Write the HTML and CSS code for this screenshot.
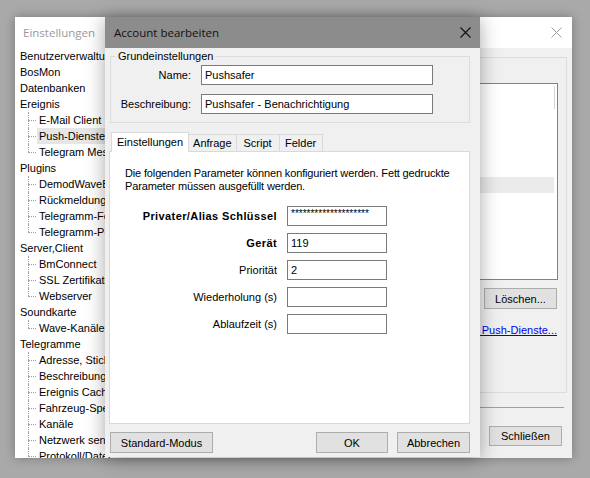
FILE: index.html
```html
<!DOCTYPE html>
<html lang="de">
<head>
    <meta charset="UTF-8">
    <title>Account bearbeiten</title>
    <link rel="stylesheet" href="styles.css">
</head>
<body>
    <div class="desktop">
        <!-- Hauptfenster Einstellungen (inaktiv) -->
        <div class="window settings-window">
            <div class="titlebar">
                <span class="title">Einstellungen</span>
                <svg class="close" width="11" height="11" viewBox="0 0 11 11"><path d="M0.5 0.5 L10.5 10.5 M10.5 0.5 L0.5 10.5" stroke="#9a9a9a" stroke-width="1"/></svg>
            </div>
            <div class="window-body">
                <ul class="tree">
                    <li><span class="label">Benutzerverwaltung</span></li>
                    <li><span class="label">BosMon</span></li>
                    <li><span class="label">Datenbanken</span></li>
                    <li><span class="label">Ereignis</span>
                        <ul class="children">
                            <li><span class="label">E-Mail Client</span></li>
                            <li class="selected"><span class="label">Push-Dienste</span></li>
                            <li><span class="label">Telegram Messenger</span></li>
                        </ul>
                    </li>
                    <li><span class="label">Plugins</span>
                        <ul class="children">
                            <li><span class="label">DemodWaveBridge</span></li>
                            <li><span class="label">Rückmeldung</span></li>
                            <li><span class="label">Telegramm-Felder</span></li>
                            <li><span class="label">Telegramm-Port</span></li>
                        </ul>
                    </li>
                    <li><span class="label">Server,Client</span>
                        <ul class="children">
                            <li><span class="label">BmConnect</span></li>
                            <li><span class="label">SSL Zertifikate</span></li>
                            <li><span class="label">Webserver</span></li>
                        </ul>
                    </li>
                    <li><span class="label">Soundkarte</span>
                        <ul class="children">
                            <li><span class="label">Wave-Kanäle</span></li>
                        </ul>
                    </li>
                    <li><span class="label">Telegramme</span>
                        <ul class="children">
                            <li><span class="label">Adresse, Stichwort</span></li>
                            <li><span class="label">Beschreibungen</span></li>
                            <li><span class="label">Ereignis Cache</span></li>
                            <li><span class="label">Fahrzeug-Speicher</span></li>
                            <li><span class="label">Kanäle</span></li>
                            <li><span class="label">Netzwerk senden</span></li>
                            <li><span class="label">Protokoll/Datei</span></li>
                        </ul>
                    </li>
                </ul>
                <div class="settings-pane">
                    <div class="pane-group">
                        <div class="list-box">
                            <div class="scroll-mark"></div>
                            <div class="list-row selected"></div>
                        </div>
                        <button class="btn btn-delete">Löschen...</button>
                        <a class="link" href="#">Weitere Push-Dienste...</a>
                    </div>
                    <div class="pane-footer">
                        <button class="btn btn-close">Schließen</button>
                    </div>
                </div>
            </div>
        </div>

        <!-- Dialog Account bearbeiten -->
        <div class="window dialog">
            <div class="titlebar">
                <span class="title">Account bearbeiten</span>
                <svg class="close" width="11" height="11" viewBox="0 0 11 11"><path d="M0.5 0.5 L10.5 10.5 M10.5 0.5 L0.5 10.5" stroke="#111" stroke-width="1.1"/></svg>
            </div>
            <div class="dialog-body">
                <fieldset class="group">
                    <legend>Grundeinstellungen</legend>
                    <div class="group-row">
                        <label for="name">Name:</label>
                        <input type="text" id="name" value="Pushsafer">
                    </div>
                    <div class="group-row">
                        <label for="beschreibung">Beschreibung:</label>
                        <input type="text" id="beschreibung" value="Pushsafer - Benachrichtigung">
                    </div>
                </fieldset>

                <div class="tabs">
                    <span class="tab active">Einstellungen</span>
                    <span class="tab">Anfrage</span>
                    <span class="tab">Script</span>
                    <span class="tab">Felder</span>
                </div>
                <div class="tab-panel">
                    <p class="hint">Die folgenden Parameter können konfiguriert werden. Fett gedruckte<br>Parameter müssen ausgefüllt werden.</p>
                    <div class="fields">
                        <label class="required" for="key">Privater/Alias Schlüssel</label>
                        <input type="text" id="key" class="secret" value="********************">
                        <label class="required" for="geraet">Gerät</label>
                        <input type="text" id="geraet" value="119">
                        <label for="prio">Priorität</label>
                        <input type="text" id="prio" value="2">
                        <label for="wdh">Wiederholung (s)</label>
                        <input type="text" id="wdh" value="">
                        <label for="ablauf">Ablaufzeit (s)</label>
                        <input type="text" id="ablauf" value="">
                    </div>
                </div>

                <div class="dialog-buttons">
                    <button class="btn btn-mode">Standard-Modus</button>
                    <span class="spacer"></span>
                    <button class="btn btn-ok">OK</button>
                    <button class="btn btn-cancel">Abbrechen</button>
                </div>
            </div>
        </div>
    </div>
</body>
</html>
```

FILE: styles.css
```css
body {
    margin: 0;
    background-color: #a9a9a9;
    font-family: "Liberation Sans", Arial, sans-serif;
    font-size: 11px;
    color: #000;
    overflow: hidden;
}
.desktop {
    position: relative;
    width: 590px;
    height: 478px;
}
.window {
    position: absolute;
    display: flex;
    flex-direction: column;
    background-color: #f0f0f0;
    box-sizing: border-box;
}
.titlebar {
    height: 31px;
    flex-shrink: 0;
    display: flex;
    align-items: center;
    justify-content: space-between;
    padding: 0 10px 0 8px;
    font-family: "Open Sans", sans-serif;
    font-size: 11.5px;
}
.close {
    display: block;
}

/* Einstellungen */
.settings-window {
    left: 15px;
    top: 17px;
    width: 557px;
    height: 441px;
    box-shadow: 0 0 10px rgba(0, 0, 0, 0.3);
}
.settings-window .titlebar {
    background-color: #fff;
    color: #999;
}
.window-body {
    flex: 1;
    display: flex;
    min-height: 0;
}
.tree {
    list-style: none;
    margin: 0;
    padding: 0 0 0 5px;
    width: 220px;
    flex-shrink: 0;
    background-color: #fff;
    overflow: hidden;
    white-space: nowrap;
}
.tree li {
    line-height: 16px;
}
.tree .children {
    list-style: none;
    margin: 0 0 0 8px;
    padding: 0;
}
.children li {
    position: relative;
    padding-left: 9px;
}
.children li::before {
    content: "";
    position: absolute;
    left: 0;
    top: 8px;
    width: 8px;
    border-top: 1px dotted #a0a0a0;
}
.children li::after {
    content: "";
    position: absolute;
    left: 0;
    top: 0;
    bottom: 0;
    border-left: 1px dotted #a0a0a0;
}
.children li:last-child::after {
    bottom: 8px;
}
.tree .label {
    display: inline-block;
    padding: 0 2px;
    margin-left: -2px;
}
.children .label {
    margin-left: 0;
}
.children li.selected .label {
    background-color: #e6e6e6;
}
.settings-pane {
    flex: 1;
    display: flex;
    flex-direction: column;
    padding: 9px 5px 10px 0;
}
.pane-group {
    height: 336px;
    border: 1px solid #dcdcdc;
    box-sizing: border-box;
    padding: 25px 8px 0 0;
    display: flex;
    flex-direction: column;
    align-items: flex-end;
}
.list-box {
    position: relative;
    width: 100%;
    height: 197px;
    background-color: #fff;
    border: 1px solid #828282;
    box-sizing: border-box;
    padding-top: 93px;
}
.scroll-mark {
    position: absolute;
    right: 2px;
    top: 2px;
    height: 23px;
    border-left: 1px solid #d4d4d4;
}
.list-row.selected {
    height: 16px;
    background-color: #ebebeb;
    margin-right: 3px;
}
.btn {
    font-family: "Liberation Sans", Arial, sans-serif;
    font-size: 11px;
    color: #000;
    background-color: #e1e1e1;
    border: 1px solid #adadad;
    height: 21px;
    padding: 0;
    box-sizing: border-box;
}
.btn-delete {
    width: 73px;
    margin-top: 8px;
    margin-right: 1px;
}
.link {
    margin-top: 15px;
    color: #0000ee;
    text-decoration: underline;
    margin-right: 1px;
    white-space: nowrap;
}
.pane-footer {
    margin-top: 14px;
    border-top: 1px solid #a0a0a0;
    margin-right: 3px;
    padding-top: 18px;
    display: flex;
    justify-content: flex-end;
}
.btn-close {
    width: 73px;
    height: 20px;
    margin-right: 2px;
}

/* Dialog */
.dialog {
    left: 105px;
    top: 17px;
    width: 375px;
    height: 440px;
    box-shadow: 0 2px 18px rgba(0, 0, 0, 0.35);
}
.dialog .titlebar {
    background-color: #8c8c8c;
    color: #111;
    padding-left: 9px;
    padding-right: 9px;
}
.dialog-body {
    flex: 1;
    display: flex;
    flex-direction: column;
    padding: 2px 10px 4px 5px;
}
.group {
    margin: 0;
    padding: 3px 0 6px 0;
    border: 1px solid #dcdcdc;
    height: 73px;
    box-sizing: border-box;
}
.group legend {
    padding: 0 2px;
    margin-left: 5px;
}
.group-row {
    display: flex;
    align-items: center;
    margin-bottom: 9px;
}
.group-row label {
    width: 80px;
    text-align: right;
    margin-right: 10px;
}
input[type="text"] {
    font-family: "Liberation Sans", Arial, sans-serif;
    font-size: 11px;
    height: 20px;
    border: 1px solid #7a7a7a;
    background-color: #fff;
    padding: 0 3px;
    margin: 0;
    box-sizing: border-box;
    outline: none;
}
.group-row input {
    width: 232px;
}
.tabs {
    display: flex;
    align-items: flex-end;
    margin-top: 9px;
    height: 19px;
    padding-left: 3px;
}
.tab {
    height: 17px;
    line-height: 16px;
    min-width: 43px;
    text-align: center;
    padding: 0 4px;
    border: 1px solid #d9d9d9;
    border-bottom: none;
    border-left: none;
    box-sizing: border-box;
    background-color: #f0f0f0;
}
.tab.active {
    position: relative;
    z-index: 1;
    height: 20px;
    margin-bottom: -1px;
    padding: 0 5px;
    margin-left: -2px;
    border-left: 1px solid #d9d9d9;
    background-color: #fff;
    line-height: 19px;
}
.tab-panel {
    height: 273px;
    box-sizing: border-box;
    background-color: #fff;
    border: 1px solid #d9d9d9;
    margin-left: -1px;
    padding: 15px 0 0 15px;
}
.hint {
    margin: 0;
    line-height: 13px;
    letter-spacing: -0.15px;
    white-space: nowrap;
}
.fields {
    display: grid;
    grid-template-columns: 152px 100px;
    column-gap: 10px;
    row-gap: 7px;
    align-items: center;
    margin-top: 13px;
}
.fields label {
    text-align: right;
}
.fields label.required {
    font-weight: bold;
    letter-spacing: 0.4px;
}
.fields input.secret {
    font-size: 10px;
    padding-bottom: 5px;
}
.dialog-buttons {
    display: flex;
    margin-top: 8px;
    gap: 9px;
}
.spacer {
    flex: 1;
}
.btn-mode {
    width: 103px;
}
.btn-ok {
    width: 72px;
}
.btn-cancel {
    width: 73px;
}
```
